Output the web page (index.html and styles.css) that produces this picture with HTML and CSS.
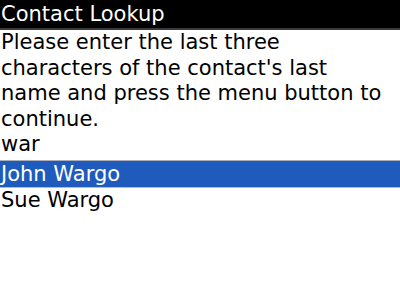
FILE: index.html
```html
<!DOCTYPE html>
<html>
<head>
<meta charset="utf-8">
<link rel="stylesheet" href="styles.css">
</head>
<body>
<div class="screen">
  <div class="title">Contact Lookup</div>
  <div class="prompt">Please enter the last three characters of the contact's last name and press the menu button to continue.</div>
  <div class="field">war</div>
  <div class="list">
    <div class="row selected">John Wargo</div>
    <div class="row">Sue Wargo</div>
  </div>
</div>
</body>
</html>
```
FILE: styles.css
```css
html, body {
  margin: 0;
  padding: 0;
  background: #fff;
}
.screen {
  width: 400px;
  height: 300px;
  overflow: hidden;
  font-family: "DejaVu Sans", sans-serif;
  font-size: 21px;
  color: #000;
}
.title {
  background: #000;
  color: #fff;
  height: 28px;
  line-height: 28px;
  padding-left: 1px;
  border-bottom: 2px solid #3a3a3a;
}
.prompt {
  line-height: 25.5px;
  padding: 0 9px 0 1px;
}
.field {
  line-height: 25.5px;
  padding-left: 1px;
  height: 28px;
  border-bottom: 1px solid #a9b0bc;
}
.row {
  height: 25px;
  line-height: 25px;
  padding-left: 1px;
}
.row.selected {
  height: 26px;
  line-height: 26px;
  background: #1e5bbd;
  color: #fff;
  border-bottom: 1px solid #9cc0ee;
}
```
